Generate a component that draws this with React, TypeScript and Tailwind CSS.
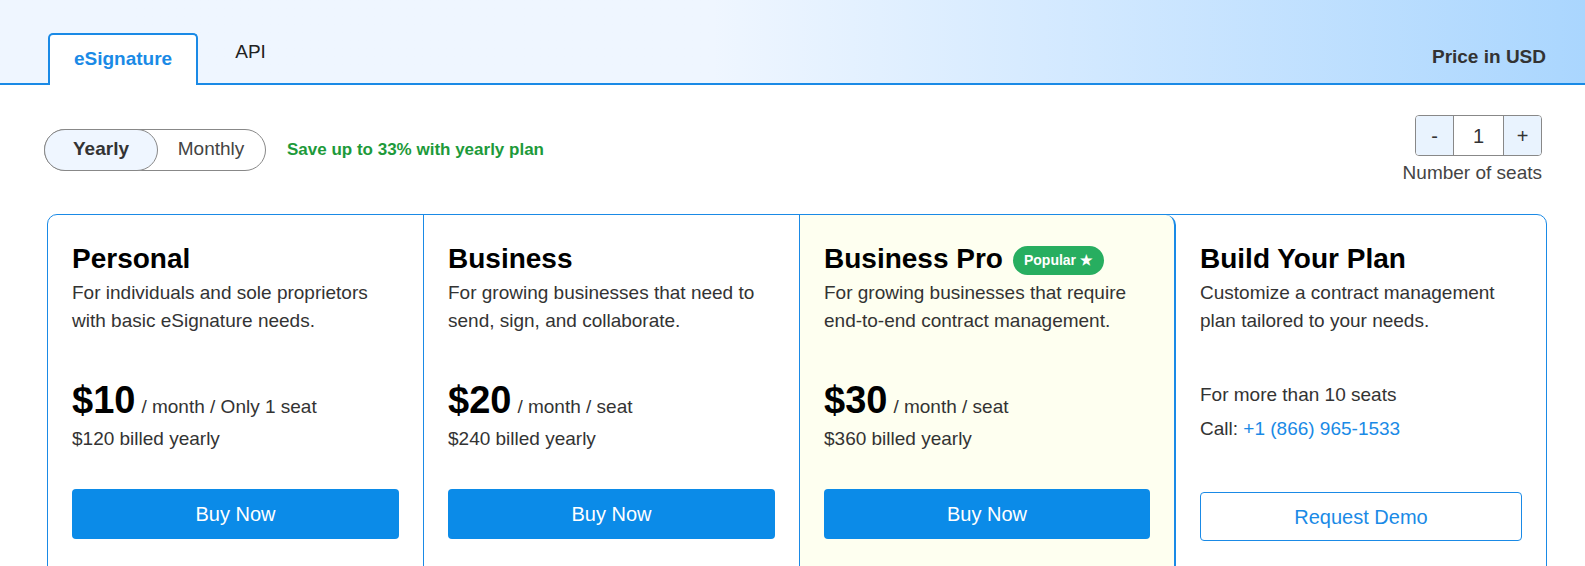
import { useState } from 'react';

type Plan = {
  name: string;
  desc: string[];
  price: string;
  unit: string;
  billed: string;
  popular?: boolean;
};

const plans: Plan[] = [
  {
    name: 'Personal',
    desc: ['For individuals and sole proprietors', 'with basic eSignature needs.'],
    price: '$10',
    unit: '/ month / Only 1 seat',
    billed: '$120 billed yearly',
  },
  {
    name: 'Business',
    desc: ['For growing businesses that need to', 'send, sign, and collaborate.'],
    price: '$20',
    unit: '/ month / seat',
    billed: '$240 billed yearly',
  },
  {
    name: 'Business Pro',
    desc: ['For growing businesses that require', 'end-to-end contract management.'],
    price: '$30',
    unit: '/ month / seat',
    billed: '$360 billed yearly',
    popular: true,
  },
];

function PlanCard({ plan }: { plan: Plan }) {
  return (
    <div
      className={
        plan.popular
          ? 'rounded-tr-[10px] border-r-2 border-[#1a8ae6] bg-[#fefff0] px-6 pt-[28px] pb-10'
          : 'border-r border-[#1a8ae6] px-6 pt-[28px] pb-10'
      }
    >
      <div className="flex items-center gap-[10px]">
        <h2 className="text-[28px] leading-[32px] font-bold text-black">{plan.name}</h2>
        {plan.popular && (
          <span className="mt-[2px] flex h-[29px] items-center rounded-full bg-[#27ae60] px-[11px] text-[14px] font-bold text-white">
            Popular ★
          </span>
        )}
      </div>
      <p className="mt-[4px] text-[19px] leading-[28px] text-[#333]">
        {plan.desc[0]}
        <br />
        {plan.desc[1]}
      </p>
      <div className="mt-[48px] flex items-baseline gap-[6px] leading-[34px]">
        <span className="text-[38px] font-bold text-black">{plan.price}</span>
        <span className="text-[19px] text-[#333]">{plan.unit}</span>
      </div>
      <div className="mt-[1px] text-[19px] leading-[28px] text-[#333]">{plan.billed}</div>
      <button className="mt-[36px] h-[50px] w-full rounded-[4px] bg-[#0b8be8] text-[20px] text-white">
        Buy Now
      </button>
    </div>
  );
}

export default function App() {
  const [yearly, setYearly] = useState(true);
  const [seats, setSeats] = useState(1);

  return (
    <div className="h-screen overflow-hidden bg-white font-['Liberation_Sans',Arial,sans-serif] text-[#333]">
      <header className="h-[85px] border-b-2 border-[#1a8ae6] bg-linear-to-r from-[#eff6ff] from-45% to-[#aad6fe]">
        <div className="ml-[48px] flex h-full w-[1498px]">
          <div className="mb-[-2px] flex h-[52px] items-start self-end rounded-t-[5px] border-2 border-b-0 border-[#1a8ae6] bg-white px-[24px] pt-[12px]">
            <span className="text-[19px] leading-[24px] font-bold text-[#1a8ae6]">eSignature</span>
          </div>
          <div className="ml-[37px] mt-[41px] text-[19px] leading-[22px] text-[#222]">API</div>
          <div className="ml-auto mt-[46px] text-[19px] leading-[22px] font-bold text-[#333]">
            Price in USD
          </div>
        </div>
      </header>

      <main className="ml-[47px] w-[1500px]">
        <div className="flex items-center justify-between pt-[30px]">
          <div className="-ml-[3px] flex items-center gap-[21px]">
            <div className="flex h-[42px] w-[222px] rounded-full border border-[#888] text-[19px]">
              <button
                onClick={() => setYearly(true)}
                className={
                  yearly
                    ? '-m-px w-[114px] rounded-full border border-[#888] bg-[#eff6ff] font-bold text-[#333]'
                    : 'w-[113px] rounded-full text-[#444]'
                }
              >
                Yearly
              </button>
              <button
                onClick={() => setYearly(false)}
                className={
                  !yearly
                    ? '-m-px flex-1 rounded-full border border-[#888] bg-[#eff6ff] font-bold text-[#333]'
                    : 'flex-1 rounded-full text-[#444]'
                }
              >
                Monthly
              </button>
            </div>
            <span className="text-[17px] font-bold text-[#1d9a3a]">Save up to 33% with yearly plan</span>
          </div>
          <div className="mr-[5px] flex flex-col items-end">
            <div className="flex h-[41px] overflow-hidden rounded-[4px] border border-[#888] text-[20px] text-[#333]">
              <button
                onClick={() => setSeats(Math.max(1, seats - 1))}
                className="w-[38px] border-r border-[#888] bg-[#e9f3fe]"
              >
                -
              </button>
              <div className="flex w-[49px] items-center justify-center bg-white">{seats}</div>
              <button
                onClick={() => setSeats(seats + 1)}
                className="w-[38px] border-l border-[#888] bg-[#e9f3fe]"
              >
                +
              </button>
            </div>
            <div className="mt-[6px] text-[19px] leading-[22px] text-[#444]">Number of seats</div>
          </div>
        </div>

        <div className="mt-[30px] grid grid-cols-[376px_376px_376px_1fr] overflow-hidden rounded-[10px] border border-[#1a8ae6]">
          {plans.map((p) => (
            <PlanCard key={p.name} plan={p} />
          ))}
          <div className="px-6 pt-[28px] pb-10">
            <h2 className="text-[28px] leading-[32px] font-bold text-black">Build Your Plan</h2>
            <p className="mt-[4px] text-[19px] leading-[28px] text-[#333]">
              Customize a contract management
              <br />
              plan tailored to your needs.
            </p>
            <div className="mt-[46px] text-[19px] leading-[28px] text-[#333]">For more than 10 seats</div>
            <div className="mt-[6px] text-[19px] leading-[28px] text-[#333]">
              Call: <span className="text-[#1a8ae6]">+1 (866) 965-1533</span>
            </div>
            <button className="mt-[49px] h-[49px] w-full rounded-[4px] border border-[#1a8ae6] bg-white text-[20px] text-[#1a8ae6]">
              Request Demo
            </button>
          </div>
        </div>
      </main>
    </div>
  );
}
